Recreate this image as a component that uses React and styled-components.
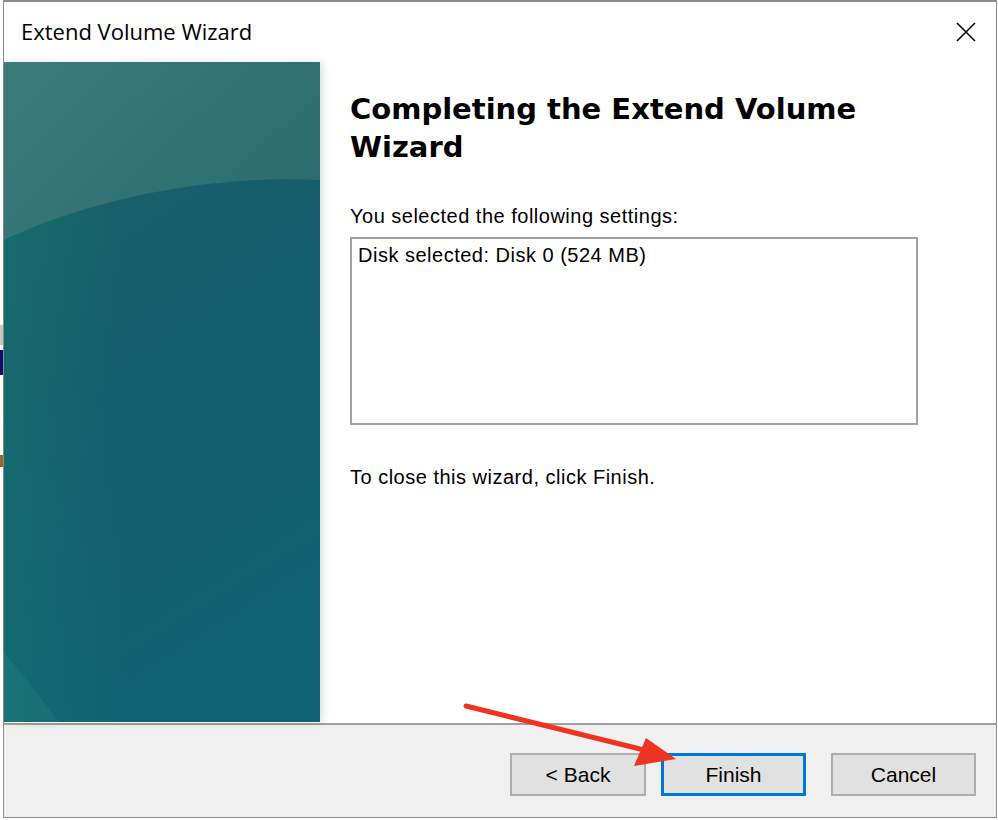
import React from 'react';
import styled, { createGlobalStyle } from 'styled-components';

const GlobalStyle = createGlobalStyle`
  html, body {
    margin: 0;
    padding: 0;
    background: #ffffff;
  }
  body {
    font-family: "Liberation Sans", Arial, sans-serif;
  }
`;

const Page = styled.div`
  position: relative;
  width: 998px;
  height: 820px;
  padding-left: 3px;
  box-sizing: border-box;
  overflow: hidden;
`;

const Window = styled.div`
  display: flex;
  flex-direction: column;
  width: 994px;
  height: 818px;
  border: 1px solid #8c8c8c;
  border-top: 2px solid #8c8c8c;
  box-sizing: border-box;
  background: #ffffff;
`;

const TitleBar = styled.div`
  display: flex;
  align-items: center;
  justify-content: space-between;
  height: 60px;
  padding: 0 18px 0 17px;
  flex-shrink: 0;
`;

const Title = styled.div`
  font-family: "Open Sans", "Noto Sans", sans-serif;
  font-size: 22px;
  color: #000;
  margin-top: -2px;
`;

const CloseButton = styled.div`
  width: 24px;
  height: 24px;
  display: flex;
  align-items: center;
  justify-content: center;
`;

const Body = styled.div`
  display: flex;
  flex: 1;
  min-height: 0;
`;

const SidePanel = styled.div`
  position: relative;
  width: 316px;
  flex-shrink: 0;
  box-shadow: 3px 0 7px rgba(0, 0, 0, 0.12);
  z-index: 1;

  svg {
    display: block;
  }
`;

const Content = styled.div`
  flex: 1;
  display: flex;
  flex-direction: column;
  padding: 28px 0 0 30px;
`;

const Heading = styled.h1`
  margin: 0;
  font-family: "DejaVu Sans", Verdana, sans-serif;
  font-weight: bold;
  font-size: 29px;
  line-height: 38px;
  color: #000;
  width: 540px;
`;

const Label = styled.div`
  font-size: 20px;
  letter-spacing: 0.5px;
  color: #000;
  margin-top: ${(p) => p.$top}px;
  line-height: 22px;
`;

const SettingsBox = styled.div`
  margin-top: 10px;
  width: 568px;
  height: 188px;
  border: 2px solid #a0a0a0;
  box-sizing: border-box;
  padding: 5px 6px;
  font-size: 20px;
  letter-spacing: 0.5px;
  line-height: 22px;
  color: #000;
`;

const Footer = styled.div`
  height: 94px;
  flex-shrink: 0;
  background: #f0f0f0;
  border-top: 2px solid #a0a0a0;
  display: flex;
  justify-content: flex-end;
  align-items: flex-start;
  padding: 28px 20px 0 0;
  gap: 15px;
  box-sizing: border-box;
`;

const Button = styled.div`
  width: ${(p) => p.$width || 145}px;
  height: 43px;
  box-sizing: border-box;
  background: #e1e1e1;
  border: ${(p) => (p.$default ? '3px solid #0078d7' : '2px solid #adadad')};
  display: flex;
  align-items: center;
  justify-content: center;
  font-size: 21px;
  color: #000;
  margin-right: ${(p) => p.$gapAfter || 0}px;
`;

const ArrowOverlay = styled.svg`
  position: absolute;
  left: 0;
  top: 0;
  pointer-events: none;
`;

const Stripe = styled.div`
  position: absolute;
  left: 0;
  width: 3px;
  top: ${(p) => p.$top}px;
  height: ${(p) => p.$h}px;
  background: ${(p) => p.$color};
`;

function SideArt() {
  return (
    <svg width="316" height="660" viewBox="0 0 316 660">
      <defs>
        <linearGradient id="base" x1="0" y1="0" x2="0.3" y2="1">
          <stop offset="0" stopColor="#1d6268" />
          <stop offset="0.5" stopColor="#145e6b" />
          <stop offset="1" stopColor="#0f6272" />
        </linearGradient>
        <linearGradient id="glow" x1="0" y1="0" x2="1" y2="0.6">
          <stop offset="0" stopColor="#3b7c7a" />
          <stop offset="1" stopColor="#2d6c70" />
        </linearGradient>
        <linearGradient id="edge" x1="0" y1="0" x2="1" y2="0">
          <stop offset="0" stopColor="#157270" />
          <stop offset="1" stopColor="#157270" stopOpacity="0" />
        </linearGradient>
      </defs>
      <rect width="316" height="660" fill="url(#base)" />
      <rect width="120" height="660" fill="url(#edge)" opacity="0.55" />
      <path d="M0 0 H316 V118 C200 112 80 140 0 178 Z" fill="url(#glow)" />
      <path d="M0 590 C20 615 40 640 55 660 H0 Z" fill="#24807f" opacity="0.35" />
    </svg>
  );
}

export default function App() {
  return (
    <>
      <GlobalStyle />
      <Page>
        <Stripe $top={325} $h={20} $color="#c8c8c8" />
        <Stripe $top={350} $h={25} $color="#101070" />
        <Stripe $top={455} $h={12} $color="#9a6a30" />
        <Window>
          <TitleBar>
            <Title>Extend Volume Wizard</Title>
            <CloseButton>
              <svg width="20" height="20" viewBox="0 0 20 20">
                <path d="M1 1 L19 19 M19 1 L1 19" stroke="#000" strokeWidth="1.6" />
              </svg>
            </CloseButton>
          </TitleBar>
          <Body>
            <SidePanel>
              <SideArt />
            </SidePanel>
            <Content>
              <Heading>Completing the Extend Volume Wizard</Heading>
              <Label $top={39}>You selected the following settings:</Label>
              <SettingsBox>Disk selected: Disk 0 (524 MB)</SettingsBox>
              <Label $top={41}>To close this wizard, click Finish.</Label>
            </Content>
          </Body>
          <Footer>
            <Button $width={136}>&lt; Back</Button>
            <Button $default $gapAfter={10}>Finish</Button>
            <Button>Cancel</Button>
          </Footer>
        </Window>
        <ArrowOverlay width="998" height="820" viewBox="0 0 998 820">
          <line x1="466" y1="706" x2="640" y2="749" stroke="#ee3322" strokeWidth="5" strokeLinecap="round" />
          <polygon points="676,759 634,766 646,738" fill="#ee3322" />
        </ArrowOverlay>
      </Page>
    </>
  );
}
